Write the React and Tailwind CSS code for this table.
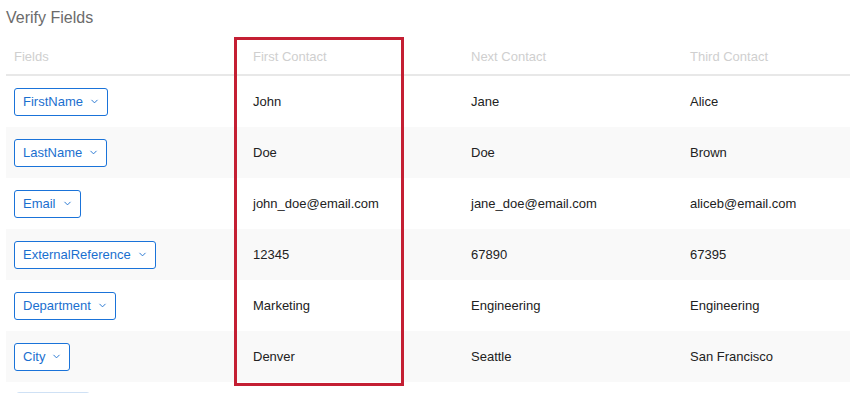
import { ChevronDown } from "lucide-react";

const rows = [
  { field: "FirstName", values: ["John", "Jane", "Alice"] },
  { field: "LastName", values: ["Doe", "Doe", "Brown"] },
  { field: "Email", values: ["john_doe@email.com", "jane_doe@email.com", "aliceb@email.com"] },
  { field: "ExternalReference", values: ["12345", "67890", "67395"] },
  { field: "Department", values: ["Marketing", "Engineering", "Engineering"] },
  { field: "City", values: ["Denver", "Seattle", "San Francisco"] },
];

const FieldButton = ({ label }) => (
  <button className="flex items-center gap-[6px] h-[28px] pl-[8px] pr-[7px] border border-[#1a73d9] rounded-[3px] text-[#1a6fcf] text-[13px] bg-white">
    {label}
    <ChevronDown size={11} strokeWidth={2} />
  </button>
);

const App = () => {
  return (
    <div
      className="relative w-[850px] h-[393px] overflow-hidden bg-white"
      style={{ fontFamily: '"Liberation Sans", Arial, sans-serif' }}
    >
      <h1 className="pl-[6px] pt-[6px] h-[37px] text-[16px] text-[#6b6b6b]">Verify Fields</h1>
      <div className="ml-[6px]">
        <div className="flex items-center pt-[2px] h-[39px] border-b-2 border-[#e8e8e8] text-[13px] text-[#cfcfcf]">
          <div className="w-[239px] pl-[8px]">Fields</div>
          <div className="w-[218px] pl-[8px]">First Contact</div>
          <div className="w-[219px] pl-[8px]">Next Contact</div>
          <div className="flex-1 pl-[8px]">Third Contact</div>
        </div>
        {rows.map((row, i) => (
          <div
            key={row.field}
            className={`flex items-center h-[51px] text-[13px] text-[#222] ${
              i % 2 === 1 ? "bg-[#f9f9f9]" : "bg-white"
            }`}
          >
            <div className="w-[239px] pl-[8px]">
              <FieldButton label={row.field} />
            </div>
            <div className="w-[218px] pl-[8px]">{row.values[0]}</div>
            <div className="w-[219px] pl-[8px]">{row.values[1]}</div>
            <div className="flex-1 pl-[8px]">{row.values[2]}</div>
          </div>
        ))}
        <div className="flex items-start h-[51px] pt-[10px] pl-[10px]">
          <div className="w-[74px] h-[28px] border border-[#cfe1f5] rounded-[3px]" />
        </div>
      </div>
      <div className="absolute left-[234px] top-[37px] w-[170px] h-[349px] border-[3px] border-[#c41f33]" />
    </div>
  );
};

export default App;
